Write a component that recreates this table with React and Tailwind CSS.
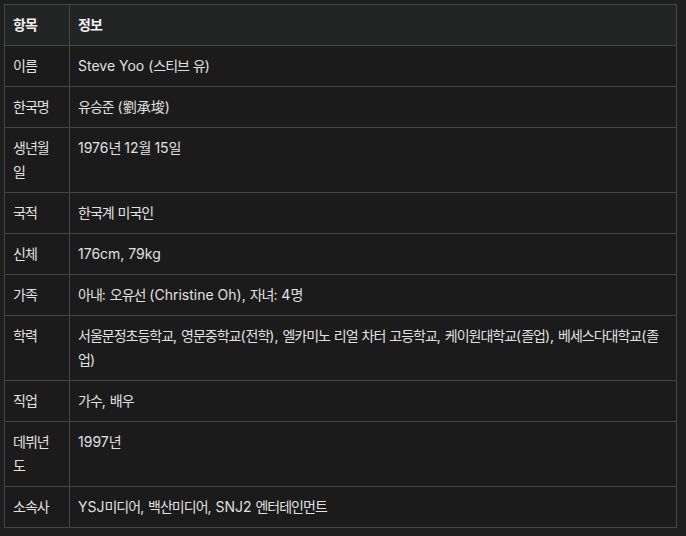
import React from "react";

const rows = [
  ["이름", "Steve Yoo (스티브 유)"],
  ["한국명", "유승준 (劉承埈)"],
  ["생년월일", "1976년 12월 15일"],
  ["국적", "한국계 미국인"],
  ["신체", "176cm, 79kg"],
  ["가족", "아내: 오유선 (Christine Oh), 자녀: 4명"],
  ["학력", "서울문정초등학교, 영문중학교(전학), 엘카미노 리얼 차터 고등학교, 케이원대학교(졸업), 베세스다대학교(졸업)"],
  ["직업", "가수, 배우"],
  ["데뷔년도", "1997년"],
  ["소속사", "YSJ미디어, 백산미디어, SNJ2 엔터테인먼트"],
];

function K({ text }) {
  const parts = text.split(/([\uAC00-\uD7A3]+)/);
  return (
    <>
      {parts.map((p, i) =>
        /[\uAC00-\uD7A3]/.test(p) ? (
          <span key={i} className="tracking-[-1px]">{p}</span>
        ) : (
          <span key={i}>{p}</span>
        )
      )}
    </>
  );
}

export default function App() {
  return (
    <div
      className="w-[686px] h-[536px] bg-[#1e1e1e] pt-[4px] pl-[4px] text-[#e0e0e0]"
      style={{ fontFamily: 'Inter, "Noto Sans CJK KR", sans-serif' }}
    >
      <table className="w-[673px] table-fixed border-collapse border border-[#454545] bg-[#1b1b1b] text-[14px] leading-[24px]">
        <colgroup>
          <col className="w-[65px]" />
          <col />
        </colgroup>
        <thead>
          <tr className="bg-[#232524] h-[41px]">
            <th className="border border-[#454545] pl-2 pr-[10px] py-2 text-left font-bold text-[#f0f0f0]"><K text="항목" /></th>
            <th className="border border-[#454545] px-2 py-2 text-left font-bold text-[#f0f0f0]"><K text="정보" /></th>
          </tr>
        </thead>
        <tbody>
          {rows.map(([k, v]) => (
            <tr key={k}>
              <td className="border border-[#454545] pl-2 pr-[10px] py-2 align-top break-all"><K text={k} /></td>
              <td className="border border-[#454545] px-2 py-2 align-top break-all"><K text={v} /></td>
            </tr>
          ))}
        </tbody>
      </table>
    </div>
  );
}
